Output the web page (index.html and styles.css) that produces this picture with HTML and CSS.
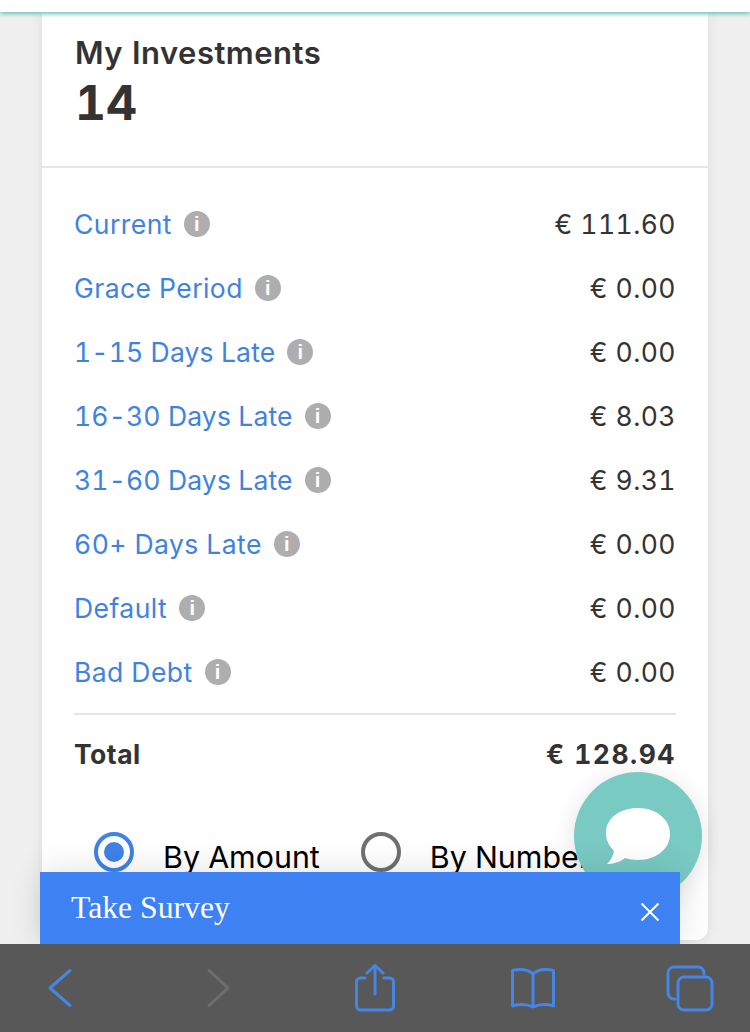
FILE: index.html
```html
<!DOCTYPE html>
<html>
  <head>
    <meta charset="utf-8">
    <title>My Investments</title>
    <link rel="stylesheet" href="styles.css">
  </head>
  <body>
    <div class="screen">
      <div class="topbar"></div>

      <div class="content">
        <div class="card">
          <div class="card-head">
            <h2>My Investments</h2>
            <div class="count">14</div>
          </div>

          <div class="card-body">
            <div class="row"><a>Current</a><i class="info">i</i><span class="amount">€ 111.60</span></div>
            <div class="row"><a>Grace Period</a><i class="info">i</i><span class="amount">€ 0.00</span></div>
            <div class="row"><a class="range">1-15 Days Late</a><i class="info">i</i><span class="amount">€ 0.00</span></div>
            <div class="row"><a class="range">16-30 Days Late</a><i class="info">i</i><span class="amount">€ 8.03</span></div>
            <div class="row"><a class="range">31-60 Days Late</a><i class="info">i</i><span class="amount">€ 9.31</span></div>
            <div class="row"><a>60+ Days Late</a><i class="info">i</i><span class="amount">€ 0.00</span></div>
            <div class="row"><a>Default</a><i class="info">i</i><span class="amount">€ 0.00</span></div>
            <div class="row"><a>Bad Debt</a><i class="info">i</i><span class="amount">€ 0.00</span></div>

            <div class="total"><span>Total</span><span class="total-amount">€ 128.94</span></div>

            <div class="radios">
              <span class="radio on"></span><span class="radio-label first">By Amount</span>
              <span class="radio"></span><span class="radio-label">By Number</span>
            </div>
          </div>
        </div>
      </div>

      <!-- chat button -->
      <div class="chat">
        <svg width="66" height="56" viewBox="0 0 66 56">
          <path fill="#fff" d="M33 0C15 0 1 10 1 25c0 7 3 13 8 18-1 5-3 9-7 13 6 0 13-2 18-6 4 1 8 2 13 2 18 0 32-11 32-26S51 0 33 0z"/>
        </svg>
      </div>

      <!-- survey banner -->
      <div class="survey">
        <span>Take Survey</span>
        <svg width="20" height="20" viewBox="0 0 20 20">
          <path stroke="#fff" stroke-width="2" fill="none" d="M1.500 1.500l17 17M18.500 1.500l-17 17"/>
        </svg>
      </div>

      <div class="toolbar">
        <svg width="48" height="48" viewBox="0 0 48 48">
          <path d="M34 6.500L14 24l20 17.500" class="ico"/>
        </svg>
        <svg width="48" height="48" viewBox="0 0 48 48">
          <path d="M15 6.500L34 24 15 41.500" class="ico off"/>
        </svg>
        <svg width="48" height="48" viewBox="0 0 48 48">
          <path d="M14 14H9.500a4 4 0 0 0-4 4v24a4 4 0 0 0 4 4h29a4 4 0 0 0 4-4V18a4 4 0 0 0-4-4H33M24 30V1.500M16 9l8-7.500L32 9" class="ico"/>
        </svg>
        <svg width="48" height="48" viewBox="0 0 48 48">
          <path d="M24 10C20 6 13 5 5 6c-1 0-1.500.6-1.500 1.500V42c7-2 14-2 20.500 1 6.500-3 13.500-3 20.500-1V7.500C44.500 6.600 44 6 43 6 35 5 28 6 24 10zM24 10v33" class="ico"/>
        </svg>
        <svg width="48" height="48" viewBox="0 0 48 48">
          <path d="M9 35H8a6 6 0 0 1-6-6V9a6 6 0 0 1 6-6h24a6 6 0 0 1 6 6v1" class="ico"/>
          <rect x="12" y="13" width="34" height="33" rx="6" class="ico"/>
        </svg>
      </div>
    </div>
  </body>
</html>
```

FILE: styles.css
```css
* {
  box-sizing: border-box;
}
html, body {
  margin: 0;
  padding: 0;
}
body {
  font-family: Inter, "Liberation Sans", sans-serif;
  color: #333;
  font-variant-numeric: tabular-nums;
}
.screen {
  position: relative;
  width: 750px;
  height: 1032px;
  overflow: hidden;
  display: flex;
  flex-direction: column;
  background: #f0f0f0;
}
.topbar {
  height: 12px;
  flex: none;
  background: #fff;
  box-shadow: 0 2px 4px #6dbfb8;
  position: relative;
  z-index: 1;
}
.content {
  flex: 1;
  min-height: 0;
  padding: 0 42px 4px;
}
.card {
  height: 100%;
  background: #fff;
  border-radius: 0 0 12px 12px;
  box-shadow: 0 0 14px rgba(0,0,0,0.09);
  overflow: hidden;
}
.card-head {
  height: 156px;
  padding: 23px 33px 0;
  border-bottom: 2px solid #e6e6e6;
}
.card-head h2 {
  margin: 0;
  font-size: 31px;
  line-height: 36px;
  font-weight: 600;
  letter-spacing: 0.5px;
}
.count {
  font-size: 48px;
  line-height: 64px;
  font-weight: 700;
}
.card-body {
  padding: 24px 32px 0;
}
.row {
  display: flex;
  align-items: center;
  height: 64px;
  font-size: 26.5px;
  letter-spacing: 0.45px;
}
.row a {
  color: #3f82e0;
}
.row a.range {
  letter-spacing: 0.15px;
}
.info {
  width: 26px;
  height: 26px;
  margin-left: 12px;
  border-radius: 50%;
  background: #aeaeae;
  color: #fff;
  font-family: "Liberation Sans", sans-serif;
  font-size: 20px;
  line-height: 26px;
  font-weight: 700;
  font-style: normal;
  text-align: center;
  letter-spacing: 0;
}
.amount {
  margin-left: auto;
}
.total {
  display: flex;
  justify-content: space-between;
  align-items: center;
  height: 80px;
  margin-top: 9px;
  border-top: 2px solid #e6e6e6;
  font-size: 26.5px;
  font-weight: 700;
  letter-spacing: 0.5px;
}
.total-amount {
  letter-spacing: 1.5px;
}
.radios {
  display: flex;
  align-items: center;
  margin-top: 36px;
  padding-left: 20px;
}
.radio {
  width: 40px;
  height: 40px;
  flex: none;
  border-radius: 50%;
  border: 4px solid #707070;
  background: #fff;
}
.radio.on {
  border-color: #3f82e8;
  padding: 6px;
  background: #3f82e8 content-box;
}
.radio-label {
  margin-left: 29px;
  padding-top: 10px;
  font-size: 30.4px;
  color: #000;
  white-space: nowrap;
}
.radio-label.first {
  margin-right: 41px;
}
.chat {
  position: absolute;
  left: 574px;
  top: 772px;
  width: 128px;
  height: 128px;
  border-radius: 50%;
  background: #79cac3;
  box-shadow: 0 4px 24px rgba(0,0,0,0.12);
  display: flex;
  align-items: center;
  justify-content: center;
}
.survey {
  position: absolute;
  left: 40px;
  top: 872px;
  width: 640px;
  height: 72px;
  padding: 0 20px 0 31px;
  background: #3d81f2;
  box-shadow: 0 0 36px rgba(0,0,0,0.12);
  color: #fff;
  font-family: "Liberation Serif", serif;
  font-size: 31.7px;
  display: flex;
  align-items: center;
  justify-content: space-between;
}
.survey svg {
  margin-top: 8px;
}
.toolbar {
  height: 88px;
  flex: none;
  background: #585858;
  position: relative;
  z-index: 1;
  display: flex;
  align-items: center;
  justify-content: space-between;
  padding: 0 36px;
}
.ico {
  fill: none;
  stroke: #4386e6;
  stroke-width: 3;
  stroke-linecap: round;
  stroke-linejoin: round;
}
.ico.off {
  stroke: #6e6e6e;
}
```
